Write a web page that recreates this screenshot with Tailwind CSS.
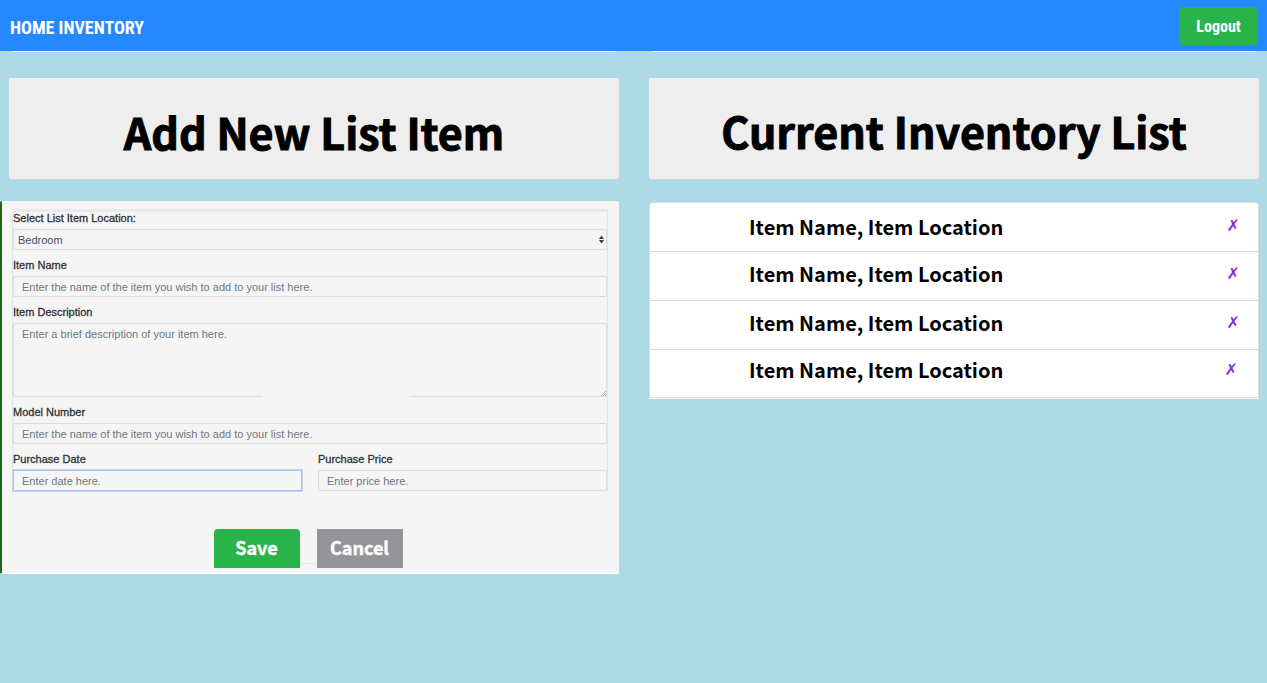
<!DOCTYPE html>
<html lang="en">
<head>
<meta charset="utf-8">
<meta name="viewport" content="width=device-width, initial-scale=1">
<title>Home Inventory</title>
<script src="https://cdn.jsdelivr.net/npm/@tailwindcss/browser@4"></script>
</head>
<body class="min-h-screen bg-[#aed9e6] font-['Noto_Sans_CJK_SC',sans-serif] text-black">
<header class="flex h-[51px] items-center justify-between bg-[#2688ff] pr-[9px] pl-[10px] font-['Roboto_Condensed','Roboto',sans-serif] text-white">
  <a href="#" class="pt-1 text-[18px] leading-6 font-bold">HOME INVENTORY</a>
  <button type="button" class="h-[38px] w-[79px] rounded bg-[#28b34b] pt-[2px] text-[16px] leading-6 font-bold">Logout</button>
</header>
<div class="grid grid-cols-[619fr_610fr] gap-[30px] pr-2" aria-hidden="true">
  <div class="mr-[3px] ml-3 h-px bg-[#e6f3f7]"></div>
  <div class="mx-[3px] h-px bg-[#e6f3f7]"></div>
</div>
<main class="grid grid-cols-[619fr_610fr] items-start gap-[30px] pt-[26px] pr-2">
  <section>
    <h1 class="ml-[9px] flex h-[101px] items-center justify-center rounded-b-xs bg-[#eeeeee] pt-[6px] text-[43px] leading-none font-bold [-webkit-text-stroke:1px_black]">Add New List Item</h1>
    <form class="mt-[22px] rounded-xs border-b border-l-2 border-b-white border-l-[#1f6419] bg-[#f5f5f5] pt-2 pr-[11px] pb-[5px] pl-[10px] font-['Liberation_Sans',sans-serif] text-[11px] leading-3 text-[#2e3238]">
      <div class="flex flex-col gap-[9px] border-x border-t-3 border-x-[#e3e4e6] border-t-[#e9e9ea]">
        <div class="flex flex-col gap-[5px]">
          <label for="location" class="[-webkit-text-stroke:.3px]">Select List Item Location:</label>
          <div class="relative">
            <select id="location" class="block h-[21px] w-full appearance-none rounded-xs border border-[#dcdde0] bg-[#f5f5f7] px-1 text-[#4c5158]"><option>Bedroom</option></select>
            <svg class="pointer-events-none absolute top-[6px] right-[2px] h-[9px] w-[7px]" viewBox="0 0 7 9" fill="#343a40" aria-hidden="true"><path d="M3.500 .5 6 4H1zM3.500 8.500 1 5h5z"/></svg>
          </div>
        </div>
        <div class="flex flex-col gap-[5px]">
          <label for="name" class="[-webkit-text-stroke:.3px]">Item Name</label>
          <input id="name" type="text" placeholder="Enter the name of the item you wish to add to your list here." class="h-[21px] w-full rounded-xs border border-[#dcdde0] bg-[#f5f5f7] px-2 placeholder:text-[#70757c]">
        </div>
        <div class="flex flex-col gap-[5px]">
          <label for="description" class="[-webkit-text-stroke:.3px]">Item Description</label>
          <div class="relative">
            <textarea id="description" placeholder="Enter a brief description of your item here." class="block h-[74px] w-full resize-none rounded-xs border border-[#dcdde0] bg-[#f5f5f6] px-2 py-1 placeholder:text-[#70757c]"></textarea>
            <span class="absolute bottom-0 left-[42%] h-px w-1/4 bg-[#f5f5f5]"></span>
            <svg class="pointer-events-none absolute right-px bottom-px size-[5px]" viewBox="0 0 5 5" stroke="#999da2" stroke-width=".8" aria-hidden="true"><path d="M0 5 5 0M2 5 5 2M4 5 5 4"/></svg>
          </div>
        </div>
        <div class="flex flex-col gap-[5px]">
          <label for="model" class="[-webkit-text-stroke:.3px]">Model Number</label>
          <input id="model" type="text" placeholder="Enter the name of the item you wish to add to your list here." class="h-[21px] w-full rounded-xs border border-[#dcdde0] bg-[#f5f5f6] px-2 placeholder:text-[#70757c]">
        </div>
        <div class="grid grid-cols-2 gap-4">
          <div class="flex flex-col gap-[5px]">
            <label for="date" class="[-webkit-text-stroke:.3px]">Purchase Date</label>
            <input id="date" type="text" placeholder="Enter date here." class="h-[21px] w-full border border-[#a9c2f0] bg-[#f5f5f6] px-2 ring-1 ring-[#c3d3f3] placeholder:text-[#70757c]">
          </div>
          <div class="flex flex-col gap-[5px]">
            <label for="price" class="[-webkit-text-stroke:.3px]">Purchase Price</label>
            <input id="price" type="text" placeholder="Enter price here." class="h-[21px] w-full rounded-xs border border-[#dcdde0] bg-[#f5f5f6] px-2 placeholder:text-[#70757c]">
          </div>
        </div>
      </div>
      <div class="mt-[38px] flex items-end justify-center pr-1 font-['Noto_Sans_CJK_SC',sans-serif] text-[18px] leading-6 font-bold text-white">
        <button type="button" class="h-[39px] w-[86px] rounded-t bg-[#28b34b] pb-1 [-webkit-text-stroke:.4px]">Save</button>
        <span class="mb-1 h-px w-[17px] bg-[#e9e9ea]"></span>
        <button type="button" class="h-[39px] w-[86px] bg-[#949599] pb-1 [-webkit-text-stroke:.4px]">Cancel</button>
      </div>
    </form>
  </section>
  <section>
    <h1 class="flex h-[101px] items-center justify-center rounded-b-xs bg-[#eeeeee] pt-1 text-[43px] leading-none font-bold [-webkit-text-stroke:1px_black]">Current Inventory List</h1>
    <ul class="mt-[23px] rounded-t border border-[#dcdcdc] border-b-white bg-white text-[20px] leading-6 font-bold">
      <li class="flex h-[49px] items-center justify-between border-b border-[#dcdcdc] pr-[18px] pb-px pl-[99px]"><span>Item Name, Item Location</span><button type="button" aria-label="Remove" class="pb-[2px] font-['DejaVu_Sans',sans-serif] text-[16px] font-normal text-[#8a2be2]">✗</button></li>
      <li class="flex h-[49px] items-center justify-between border-b border-[#dcdcdc] pr-[18px] pb-1 pl-[99px]"><span>Item Name, Item Location</span><button type="button" aria-label="Remove" class="font-['DejaVu_Sans',sans-serif] text-[16px] font-normal text-[#8a2be2]">✗</button></li>
      <li class="flex h-[49px] items-center justify-between border-b border-[#dcdcdc] pr-[18px] pb-1 pl-[99px]"><span>Item Name, Item Location</span><button type="button" aria-label="Remove" class="font-['DejaVu_Sans',sans-serif] text-[16px] font-normal text-[#8a2be2]">✗</button></li>
      <li class="flex h-[48px] items-center justify-between border-b border-[#dcdcdc] pr-5 pb-2 pl-[99px]"><span>Item Name, Item Location</span><button type="button" aria-label="Remove" class="font-['DejaVu_Sans',sans-serif] text-[16px] font-normal text-[#8a2be2]">✗</button></li>
    </ul>
  </section>
</main>
</body>
</html>
